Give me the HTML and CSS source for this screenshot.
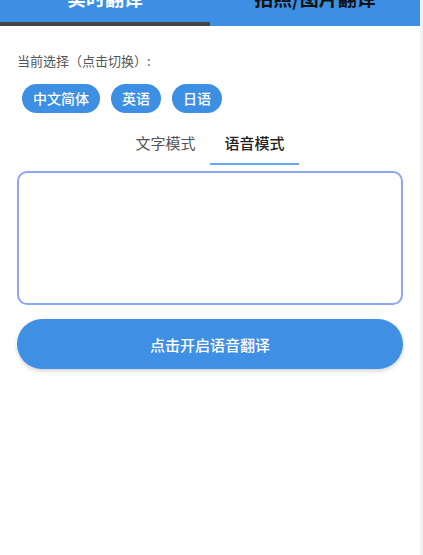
FILE: index.html
```html
<!DOCTYPE html>
<html lang="zh">
<head>
  <meta charset="UTF-8" />
  <meta name="viewport" content="width=device-width, initial-scale=1.0"/>
  <title>翻译</title>
  <link rel="stylesheet" href="styles.css">
</head>
<body>
  <div class="page">
    <div class="tabs">
      <div class="tab active">实时翻译</div>
      <div class="tab">拍照/图片翻译</div>
    </div>

    <div class="content">
      <p class="label">当前选择（点击切换）:</p>
      <div class="chips">
        <span class="chip">中文简体</span>
        <span class="chip">英语</span>
        <span class="chip">日语</span>
      </div>

      <div class="modes">
        <div class="mode">文字模式</div>
        <div class="mode current">语音模式</div>
      </div>

      <div class="result"></div>

      <button class="voice-btn">点击开启语音翻译</button>
    </div>
  </div>
  <div class="edge"></div>
</body>
</html>
```

FILE: styles.css
```css
* {
  box-sizing: border-box;
}

body {
  margin: 0;
  padding: 0;
  font-family: "Noto Sans CJK SC", "Noto Sans", sans-serif;
  background: #fff;
  display: flex;
  height: 555px;
  overflow: hidden;
}

.page {
  width: 420px;
}

.edge {
  width: 3px;
  background: #f2f2f2;
}

/* header scrolled up, only its lower part shows */
.tabs {
  display: flex;
  background: #3d8fe3;
  height: 48px;
  margin-top: -22px;
}

.tab {
  flex: 1;
  text-align: center;
  font-size: 19px;
  font-weight: bold;
  line-height: 40px;
  color: #111;
  border-bottom: 4px solid transparent;
  height: 48px;
}

.tab.active {
  color: #fff;
  border-bottom-color: #444;
}

.content {
  padding: 0 17px;
}

.label {
  margin: 25px 0 0;
  font-size: 13px;
  line-height: 20px;
  color: #555;
}

.chips {
  display: flex;
  gap: 11px;
  margin: 13px 0 0 5px;
}

.chip {
  background: #3d8fe3;
  color: #fff;
  font-size: 14px;
  font-weight: 500;
  line-height: 29px;
  height: 29px;
  padding: 0 11px;
  border-radius: 15px;
}

.modes {
  display: flex;
  justify-content: center;
  margin-top: 12px;
}

.mode {
  width: 89px;
  text-align: center;
  font-size: 15px;
  line-height: 20px;
  padding: 8px 0 10px;
  color: #555;
  border-bottom: 2px solid transparent;
}

.mode.current {
  color: #222;
  font-weight: 500;
  border-bottom-color: #66aaf4;
}

.result {
  margin-top: 6px;
  height: 134px;
  border: 2px solid #8ba6f7;
  border-radius: 10px;
}

.voice-btn {
  display: block;
  width: 100%;
  height: 50px;
  margin-top: 14px;
  border: none;
  border-radius: 25px;
  background: #3f90e4;
  color: #fff;
  font-family: inherit;
  font-size: 15px;
  font-weight: 500;
  box-shadow: 0 2px 4px rgba(0, 0, 0, 0.18);
}
```
